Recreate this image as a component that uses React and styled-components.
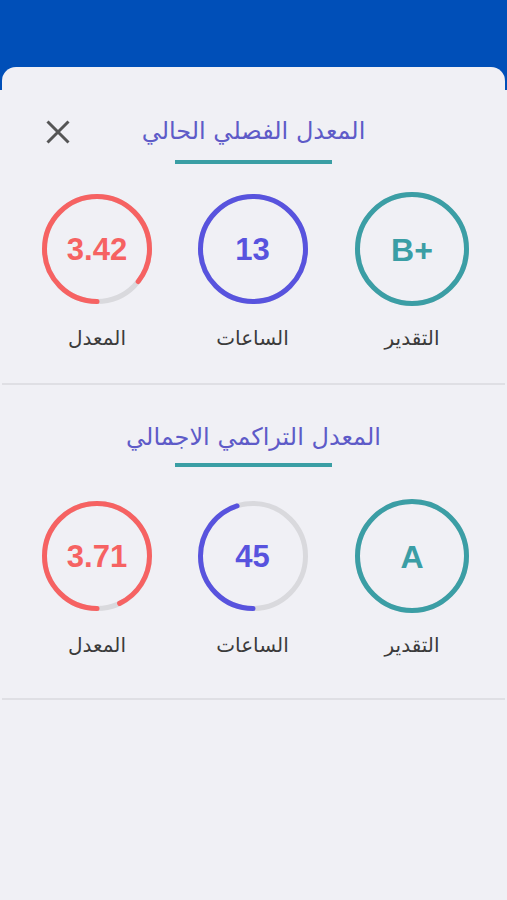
import React from "react";
import styled, { createGlobalStyle } from "styled-components";

const Global = createGlobalStyle`
  html, body { margin: 0; padding: 0; }
  body {
    background: #f0f0f5;
    font-family: "DejaVu Sans", "Noto Sans", sans-serif;
  }
`;

const Page = styled.div`
  min-height: 900px;
  background: linear-gradient(#004fb8 0, #004fb8 90px, #f0f0f5 90px);
`;

const Header = styled.div`
  height: 67px;
`;

const Card = styled.div`
  margin: 0 2px;
  min-height: 833px;
  background: #f0f0f5;
  border-radius: 14px 14px 0 0;
`;

const Section = styled.section`
  padding-top: ${(p) => p.$top}px;
  padding-bottom: ${(p) => p.$bottom}px;
  border-bottom: 2px solid #dfdfe4;
`;

const TitleRow = styled.div`
  display: grid;
  grid-template-columns: 1fr auto 1fr;
  align-items: center;
  height: 30px;
`;

const CloseButton = styled.button`
  justify-self: start;
  margin-left: 42px;
  margin-top: 2px;
  width: 28px;
  height: 28px;
  padding: 0;
  border: 0;
  background: transparent;
  display: flex;
  align-items: center;
  justify-content: center;
  cursor: pointer;
`;

const Title = styled.h2`
  grid-column: 2;
  margin: 0;
  direction: rtl;
  font-family: "DejaVu Sans", sans-serif;
  font-weight: normal;
  font-size: 24px;
  line-height: 30px;
  color: #5e5bc8;
  white-space: nowrap;
`;

const Underline = styled.div`
  width: 157px;
  height: 4px;
  margin: ${(p) => p.$gap}px auto 0;
  background: #3a9ea4;
`;

const StatsRow = styled.div`
  display: flex;
  justify-content: space-between;
  align-items: flex-start;
  padding: 0 36px 0 38px;
  margin-top: ${(p) => p.$gap}px;
`;

const Stat = styled.div`
  display: flex;
  flex-direction: column;
  align-items: center;
  width: 114px;
  margin-right: ${(p) => p.$shift || 0}px;
`;

const Ring = styled.div`
  position: relative;
  width: 114px;
  height: 114px;
  display: flex;
  align-items: center;
  justify-content: center;
  svg {
    position: absolute;
    left: 50%;
    top: 50%;
    transform: translate(-50%, -50%);
  }
`;

const Value = styled.span`
  position: relative;
  font-family: "Liberation Sans", Arial, sans-serif;
  font-weight: bold;
  font-size: ${(p) => p.$fs}px;
  color: ${(p) => p.$color};
  margin-top: 2px;
`;

const Label = styled.div`
  margin-top: 20px;
  height: 24px;
  direction: rtl;
  font-family: "DejaVu Sans", sans-serif;
  font-size: 20px;
  line-height: 24px;
  color: #3b3b3b;
  white-space: nowrap;
`;

function Progress({ size, stroke, color, value }) {
  const r = (size - stroke) / 2;
  const c = 2 * Math.PI * r;
  const full = value >= 1;
  return (
    <svg width={size} height={size} viewBox={`0 0 ${size} ${size}`}>
      <circle cx={size / 2} cy={size / 2} r={r} fill="none" stroke="#d9d9dd" strokeWidth={stroke} />
      <circle
        cx={size / 2}
        cy={size / 2}
        r={r}
        fill="none"
        stroke={color}
        strokeWidth={stroke}
        strokeLinecap={full ? "butt" : "round"}
        strokeDasharray={full ? undefined : `${c * value} ${c}`}
        transform={`rotate(90 ${size / 2} ${size / 2})`}
      />
    </svg>
  );
}

function StatItem({ size, color, value, text, fs, label, shift }) {
  return (
    <Stat $shift={shift}>
      <Ring>
        <Progress size={size} stroke={5} color={color} value={value} />
        <Value $color={color} $fs={fs}>{text}</Value>
      </Ring>
      <Label>{label}</Label>
    </Stat>
  );
}

const RED = "#f66262";
const BLUE = "#5853de";
const TEAL = "#3b9ea5";

function StatsSection({ title, top, bottom, gap, rowGap, gpa, gpaVal, hours, hoursVal, grade, withClose }) {
  return (
    <Section $top={top} $bottom={bottom}>
      <TitleRow>
        {withClose && (
          <CloseButton aria-label="close">
            <svg width="24" height="24" viewBox="0 0 24 24">
              <path d="M1.5 1.5 L22.5 22.5 M22.5 1.5 L1.5 22.5" stroke="#555" strokeWidth="3" />
            </svg>
          </CloseButton>
        )}
        <Title>{title}</Title>
      </TitleRow>
      <Underline $gap={gap} />
      <StatsRow $gap={rowGap}>
        <StatItem size={110} color={RED} value={gpaVal} text={gpa} fs={31} label="المعدل" />
        <StatItem size={110} color={BLUE} value={hoursVal} text={hours} fs={31} label="الساعات" shift={4} />
        <StatItem size={114} color={TEAL} value={1} text={grade} fs={32} label="التقدير" />
      </StatsRow>
    </Section>
  );
}

export default function App() {
  return (
    <Page>
      <Global />
      <Header />
      <Card>
        <StatsSection
          withClose
          title="المعدل الفصلي الحالي"
          top={49}
          bottom={33}
          gap={14}
          rowGap={28}
          gpa="3.42"
          gpaVal={3.42 / 4}
          hours="13"
          hoursVal={1}
          grade="B+"
        />
        <StatsSection
          title="المعدل التراكمي الاجمالي"
          top={37}
          bottom={41}
          gap={11}
          rowGap={32}
          gpa="3.71"
          gpaVal={3.71 / 4}
          hours="45"
          hoursVal={0.45}
          grade="A"
        />
      </Card>
    </Page>
  );
}
